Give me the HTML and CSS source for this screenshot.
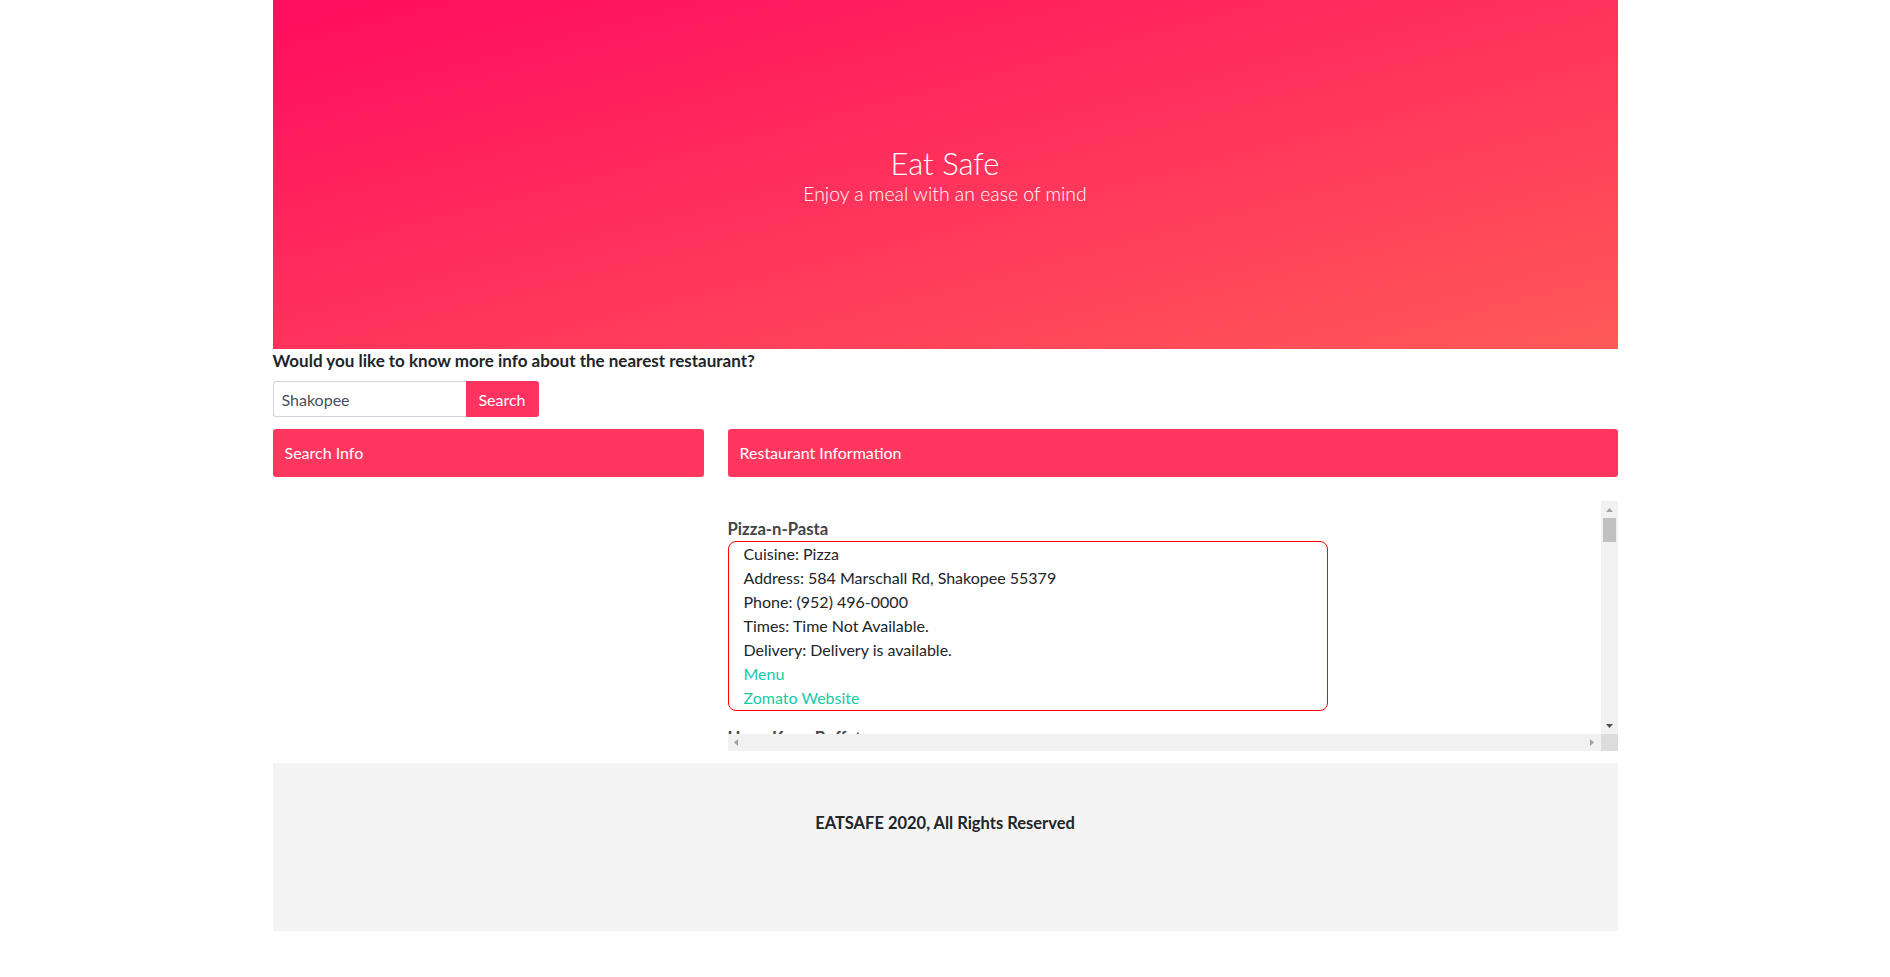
FILE: index.html
```html
<!DOCTYPE html>
<html lang="en">
<head>
<meta charset="utf-8">
<title>Eat Safe</title>
<link rel="stylesheet" href="styles.css">
</head>
<body>
<div class="page">
  <header class="hero">
    <h1 class="hero-title">Eat Safe</h1>
    <p class="hero-lead">Enjoy a meal with an ease of mind</p>
  </header>

  <label class="question" for="city">Would you like to know more info about the nearest restaurant?</label>
  <div class="search">
    <input id="city" class="search-input" type="text" value="Shakopee">
    <button class="search-btn" type="button">Search</button>
  </div>

  <div class="columns">
    <section class="col">
      <div class="bar">Search Info</div>
    </section>
    <section class="col">
      <div class="bar">Restaurant Information</div>
      <div class="scroller">
        <div class="viewport">
          <div class="rest">
            <div class="rest-name">Pizza-n-Pasta</div>
            <div class="rest-box">
              <div>Cuisine: Pizza</div>
              <div>Address: 584 Marschall Rd, Shakopee 55379</div>
              <div>Phone: (952) 496-0000</div>
              <div>Times: Time Not Available.</div>
              <div>Delivery: Delivery is available.</div>
              <div><a href="#">Menu</a></div>
              <div><a href="#">Zomato Website</a></div>
            </div>
          </div>
          <div class="rest">
            <div class="rest-name">Hong Kong Buffet</div>
            <div class="rest-box">
              <div>Cuisine: Chinese</div>
              <div>Address: 1100 Vierling Dr E, Shakopee 55379</div>
              <div>Phone: (952) 445-8888</div>
              <div>Times: Time Not Available.</div>
              <div>Delivery: Delivery is not available.</div>
              <div><a href="#">Menu</a></div>
              <div><a href="#">Zomato Website</a></div>
            </div>
          </div>
        </div>
        <div class="vbar">
          <div class="sb-btn">
            <svg width="7" height="4" viewBox="0 0 7 4"><path d="M0 4L3.5 0L7 4Z" fill="#a3a3a3"/></svg>
          </div>
          <div class="vthumb"></div>
          <div class="sb-fill"></div>
          <div class="sb-btn">
            <svg width="7" height="4" viewBox="0 0 7 4"><path d="M0 0L3.5 4L7 0Z" fill="#505050"/></svg>
          </div>
        </div>
        <div class="hbar">
          <div class="sb-btn">
            <svg width="4" height="7" viewBox="0 0 4 7"><path d="M4 0L0 3.5L4 7Z" fill="#a3a3a3"/></svg>
          </div>
          <div class="sb-fill"></div>
          <div class="sb-btn">
            <svg width="4" height="7" viewBox="0 0 4 7"><path d="M0 0L4 3.5L0 7Z" fill="#a3a3a3"/></svg>
          </div>
        </div>
        <div class="corner"></div>
      </div>
    </section>
  </div>

  <footer class="footer">EATSAFE 2020, All Rights Reserved</footer>
</div>
</body>
</html>
```

FILE: styles.css
```css
html, body {
  margin: 0;
  padding: 0;
  background: #ffffff;
}

body {
  font-family: "Lato", "Open Sans", sans-serif;
  font-size: 16px;
  line-height: 1.5;
  color: #212529;
}

.page {
  width: 1345px;
  margin: 0 auto;
}

.hero {
  height: 349px;
  background: linear-gradient(to bottom right, #ff0c5f, #ff5958);
  color: #ffffff;
  display: flex;
  flex-direction: column;
  align-items: center;
  justify-content: center;
  padding-top: 3px;
  box-sizing: border-box;
}

.hero-title {
  margin: 0;
  font-size: 31px;
  font-weight: 300;
  line-height: 34px;
}

.hero-lead {
  margin: 0;
  font-size: 19.4px;
  font-weight: 300;
  line-height: 27px;
}

.question {
  display: block;
  font-weight: 700;
  font-size: 17px;
  line-height: 24px;
  color: #212529;
}

.search {
  display: flex;
  margin-top: 8px;
  height: 36px;
}

.search-input {
  width: 193px;
  box-sizing: border-box;
  height: 36px;
  border: 1px solid #ced4da;
  border-right: none;
  border-radius: 3px 0 0 3px;
  padding: 0 8px;
  font-family: "Lato", "Open Sans", sans-serif;
  font-size: 16px;
  color: #495057;
  outline: none;
}

.search-btn {
  width: 73px;
  height: 36px;
  border: none;
  border-radius: 0 3px 3px 0;
  background: #ff3360;
  color: #ffffff;
  font-family: "Lato", "Open Sans", sans-serif;
  font-size: 16px;
  padding: 0;
}

.columns {
  display: grid;
  grid-template-columns: 431px 1fr;
  column-gap: 24px;
  margin-top: 12px;
}

.bar {
  height: 48px;
  box-sizing: border-box;
  background: #ff375f;
  color: #ffffff;
  border-radius: 3px;
  padding: 0 12px;
  display: flex;
  align-items: center;
  font-size: 16px;
}

.scroller {
  margin-top: 24px;
  display: grid;
  grid-template-columns: 1fr 17px;
  grid-template-rows: 233px 17px;
}

.viewport {
  overflow: hidden;
  padding-top: 16px;
  box-sizing: border-box;
}

.vbar {
  display: flex;
  flex-direction: column;
  background: #f1f1f1;
}

.hbar {
  display: flex;
  background: #f1f1f1;
}

.sb-btn {
  flex: 0 0 17px;
  width: 17px;
  height: 17px;
  display: flex;
  align-items: center;
  justify-content: center;
}

.sb-btn svg {
  display: block;
}

.sb-fill {
  flex: 1;
}

.vthumb {
  flex: 0 0 24px;
  margin: 0 2px;
  background: #c1c1c1;
}

.corner {
  background: #dcdcdc;
}

.rest {
  margin-bottom: 15px;
}

.rest-name {
  font-weight: 700;
  font-size: 16.7px;
  color: #444444;
  line-height: 24px;
}

.rest-box {
  width: 600px;
  box-sizing: border-box;
  border: 1px solid #ff0000;
  border-radius: 8px;
  padding: 0 15px;
  line-height: 24px;
}

.rest-box a {
  color: #17c9a6;
  text-decoration: none;
}

.footer {
  margin-top: 12px;
  height: 168px;
  box-sizing: border-box;
  background: #f4f4f4;
  padding-top: 48px;
  text-align: center;
  font-weight: 700;
  font-size: 16.5px;
  color: #212529;
}
```
